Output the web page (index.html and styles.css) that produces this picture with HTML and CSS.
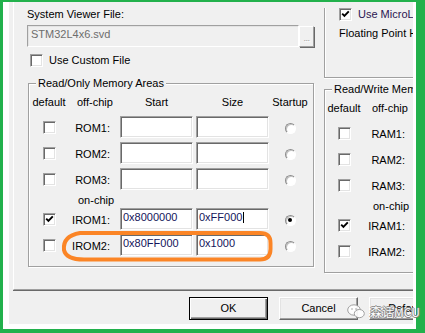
FILE: index.html
```html
<!DOCTYPE html>
<html>
<head>
<meta charset="utf-8">
<link rel="stylesheet" href="styles.css">
</head>
<body>
<div class="shot">
  <div class="dialog">
    <div class="page">
      <div class="col-left">
        <div class="lbl">System Viewer File:</div>
        <div class="file-row">
          <div class="edit-file">STM32L4x6.svd</div>
          <div class="btn-browse">...</div>
        </div>
        <div class="check-row custom"><span class="cb"></span><span>Use Custom File</span></div>
        <fieldset class="group rom">
          <legend>Read/Only Memory Areas</legend>
          <div class="mem-grid">
            <div class="h center">default</div>
            <div class="h pad">off-chip</div>
            <div class="h field">Start</div>
            <div class="h field">Size</div>
            <div class="h center">Startup</div>

            <div class="c-cb"><span class="cb"></span></div>
            <div class="c-lbl">ROM1:</div>
            <div class="c-in"><div class="edit"></div></div>
            <div class="c-in"><div class="edit"></div></div>
            <div class="c-rd"><span class="radio"></span></div>

            <div class="c-cb"><span class="cb"></span></div>
            <div class="c-lbl">ROM2:</div>
            <div class="c-in"><div class="edit"></div></div>
            <div class="c-in"><div class="edit"></div></div>
            <div class="c-rd"><span class="radio"></span></div>

            <div class="c-cb"><span class="cb"></span></div>
            <div class="c-lbl">ROM3:</div>
            <div class="c-in"><div class="edit"></div></div>
            <div class="c-in"><div class="edit"></div></div>
            <div class="c-rd"><span class="radio"></span></div>

            <div class="spacer"></div>
            <div class="onchip">on-chip</div>

            <div class="c-cb"><span class="cb"><svg viewBox="0 0 11 11" width="11" height="11"><path d="M2.2 4.6 L4.4 6.9 L8.8 2.4" fill="none" stroke="#000" stroke-width="1.9"/></svg></span></div>
            <div class="c-lbl">IROM1:</div>
            <div class="c-in"><div class="edit val">0x8000000</div></div>
            <div class="c-in"><div class="edit val">0xFF000<span class="caret"></span></div></div>
            <div class="c-rd"><span class="radio on"></span></div>

            <div class="c-cb"><span class="cb"></span></div>
            <div class="c-lbl">IROM2:</div>
            <div class="c-in"><div class="edit val">0x80FF000</div></div>
            <div class="c-in"><div class="edit val">0x1000</div></div>
            <div class="c-rd"><span class="radio"></span></div>
          </div>
        </fieldset>
      </div>
      <div class="col-right">
        <div class="group-top">
          <div class="check-row micro"><span class="cb"><svg viewBox="0 0 11 11" width="11" height="11"><path d="M2.2 4.6 L4.4 6.9 L8.8 2.4" fill="none" stroke="#000" stroke-width="1.9"/></svg></span><span class="micro-txt">Use MicroLIB</span></div>
          <div class="fp">Floating Point Hardware:</div>
        </div>
        <fieldset class="group rw">
          <legend>Read/Write Memory Areas</legend>
          <div class="mem-grid rw-grid">
            <div class="h center">default</div>
            <div class="h pad">off-chip</div>

            <div class="c-cb"><span class="cb"></span></div>
            <div class="c-lbl">RAM1:</div>

            <div class="c-cb"><span class="cb"></span></div>
            <div class="c-lbl">RAM2:</div>

            <div class="c-cb"><span class="cb"></span></div>
            <div class="c-lbl">RAM3:</div>

            <div class="spacer"></div>
            <div class="onchip">on-chip</div>

            <div class="c-cb"><span class="cb"><svg viewBox="0 0 11 11" width="11" height="11"><path d="M2.2 4.6 L4.4 6.9 L8.8 2.4" fill="none" stroke="#000" stroke-width="1.9"/></svg></span></div>
            <div class="c-lbl">IRAM1:</div>

            <div class="c-cb"><span class="cb"></span></div>
            <div class="c-lbl">IRAM2:</div>
          </div>
        </fieldset>
      </div>
    </div>
    <div class="buttons">
      <div class="btn default">OK</div>
      <div class="btn">Cancel</div>
      <div class="btn">Defaults</div>
    </div>
  </div>
</div>

<svg class="highlight" width="425" height="333" viewBox="0 0 425 333">
  <path d="M80 233 H260 Q270.5 233 270.5 243 V249 Q270.5 259.5 260 259.5 H84 Q66 259.5 64 250 Q62.5 236 80 233 Z" fill="none" stroke="#fb8526" stroke-width="4" stroke-linejoin="round"/>
</svg>

<div class="watermark">
  <svg class="wx" width="18" height="15" viewBox="0 0 18 15">
    <ellipse cx="7" cy="6" rx="6.3" ry="5.2" fill="#fff" stroke="#9a9a9a" stroke-width="1"/>
    <ellipse cx="12.3" cy="9.6" rx="5" ry="4.1" fill="#fff" stroke="#9a9a9a" stroke-width="1"/>
    <circle cx="5" cy="5" r="0.8" fill="#9a9a9a"/>
    <circle cx="9" cy="5" r="0.8" fill="#9a9a9a"/>
  </svg>
  <span class="wm-text">森话MCU</span>
</div>
</body>
</html>
```

FILE: styles.css
```css
html, body {
  margin: 0;
  padding: 0;
}

body {
  width: 425px;
  height: 333px;
  overflow: hidden;
  position: relative;
  background: #22b14c;
  font-family: "Liberation Sans", Arial, sans-serif;
  font-size: 11px;
  line-height: 13px;
  color: #000;
}

.shot {
  box-sizing: border-box;
  width: 413px;
  height: 327px;
  margin: 2px 9px 0 3px;
  padding: 0 3px 5px 6px;
  background: #fff;
}

.dialog {
  width: 404px;
  height: 322px;
  background: #f0f0f0;
  overflow: hidden;
}

.page {
  box-sizing: border-box;
  width: 480px;
  height: 288px;
  margin-left: 4px;
  border-left: 1px solid #fff;
  border-bottom: 1px solid #a0a0a0;
  box-shadow: 0 1px 0 #696969;
  display: flex;
  align-items: flex-start;
}

.col-left {
  flex: none;
  width: 288px;
  margin-left: 13px;
  padding-top: 6px;
}

.col-right {
  flex: none;
  width: 200px;
  margin-left: 9px;
  white-space: nowrap;
}

.lbl {
  height: 13px;
}

.file-row {
  display: flex;
  margin-top: 4px;
  height: 22px;
}

.edit-file {
  box-sizing: border-box;
  width: 272px;
  height: 22px;
  padding: 2px 0 0 3px;
  border: 1px solid;
  border-color: #a0a0a0 #fff #fff #a0a0a0;
  box-shadow: inset 1px 1px 0 #e3e3e3;
  background: #f0f0f0;
  color: #6d6d6d;
}

.btn-browse {
  box-sizing: border-box;
  width: 15px;
  height: 21px;
  margin-top: 1px;
  border: 1px solid;
  border-color: #fff #a0a0a0 #a0a0a0 #fff;
  box-shadow: 1px 1px 0 #696969;
  color: #a0a0a0;
  text-shadow: 1px 1px 0 #fff;
  font-size: 9px;
  line-height: 13px;
  padding-top: 5px;
  text-align: center;
  letter-spacing: -0.5px;
}

.check-row {
  display: flex;
  align-items: center;
  height: 13px;
  gap: 6px;
}

.check-row.custom {
  margin-top: 7px;
  padding-left: 3px;
}

.cb {
  box-sizing: border-box;
  flex: none;
  display: block;
  width: 13px;
  height: 13px;
  background: #fff;
  border: 1px solid;
  border-color: #a0a0a0 #fff #fff #a0a0a0;
  box-shadow: inset 1px 1px 0 #696969, inset -1px -1px 0 #e3e3e3;
}

.cb svg {
  display: block;
}

.group {
  box-sizing: border-box;
  min-width: 0;
  margin: 0;
  border: 1px solid #a0a0a0;
  box-shadow: inset 1px 1px 0 #fff, 1px 1px 0 #fff;
}

.group legend {
  padding: 0 2px;
  background: #f0f0f0;
  line-height: 13px;
}

.rom {
  width: 286px;
  margin: 10px 0 0 1px;
  padding: 6px 0 10px 2px;
}

.rom legend {
  margin-left: 5px;
}

.rw {
  width: 200px;
  margin-top: 5px;
  padding: 6px 0 10px 1px;
}

.rw legend {
  margin-left: 6px;
  white-space: nowrap;
}

.mem-grid {
  display: grid;
  grid-template-columns: 36px 53px 76px 74px 40px;
  grid-template-rows: 16px 22px 22px 22px 10px 22px 22px;
  row-gap: 4px;
}

.rw-grid {
  grid-template-columns: 36px 53px;
}

.h {
  align-self: start;
  white-space: nowrap;
}

.h.center {
  text-align: center;
}

.h.pad {
  padding-left: 10px;
}

.h.field {
  width: 73px;
  text-align: center;
}

.c-cb {
  display: flex;
  justify-content: center;
  align-items: center;
}

.c-lbl {
  align-self: center;
  text-align: right;
  padding-right: 10px;
  padding-top: 2px;
  white-space: nowrap;
}

.c-in {
  display: flex;
}

.edit {
  box-sizing: border-box;
  width: 73px;
  height: 22px;
  padding: 2px 0 0 2px;
  border: 1px solid;
  border-color: #a0a0a0 #fff #fff #a0a0a0;
  box-shadow: inset 1px 1px 0 #696969, inset -1px -1px 0 #e3e3e3;
  background: #fff;
  white-space: nowrap;
}

.edit.val {
  color: #14145a;
}

.caret {
  display: inline-block;
  width: 1px;
  height: 11px;
  margin-left: 1px;
  background: #000;
  vertical-align: -2px;
}

.c-rd {
  display: flex;
  justify-content: center;
  align-items: center;
  padding-top: 2px;
}

.radio {
  box-sizing: border-box;
  position: relative;
  display: block;
  width: 11px;
  height: 11px;
  border-radius: 50%;
  background: #fff;
  border: 1px solid;
  border-color: #8c8c8c #fff #fff #8c8c8c;
  box-shadow: inset 1px 1px 0 #c4c4c4;
}

.radio.on::after {
  content: "";
  position: absolute;
  left: 2.5px;
  top: 2.5px;
  width: 4px;
  height: 4px;
  border-radius: 50%;
  background: #000;
}

.spacer {
  grid-column: 1;
}

.onchip {
  grid-column: 2 / -1;
  align-self: start;
  padding-left: 11px;
  height: 10px;
  white-space: nowrap;
}

.group-top {
  box-sizing: content-box;
  height: 69px;
  padding-left: 14px;
  border-left: 1px solid #a0a0a0;
  border-bottom: 1px solid #a0a0a0;
  box-shadow: inset 1px 0 0 #fff, 0 1px 0 #fff;
}

.check-row.micro {
  margin-top: 6px;
}

.micro-txt {
  color: #2b1550;
}

.fp {
  margin-top: 6px;
  height: 13px;
}

.buttons {
  display: flex;
  gap: 11px;
  margin-top: 7px;
  padding-left: 180px;
}

.btn {
  flex: none;
  box-sizing: border-box;
  width: 79px;
  height: 23px;
  display: flex;
  align-items: center;
  justify-content: center;
  background: #f0f0f0;
  border: 1px solid;
  border-color: #fff #696969 #696969 #fff;
  box-shadow: inset -1px -1px 0 #a0a0a0, inset 1px 1px 0 #e3e3e3;
  white-space: nowrap;
}

.btn.default {
  border-color: #000;
  box-shadow: inset 1px 1px 0 #fff, inset -1px -1px 0 #696969, inset -2px -2px 0 #a0a0a0;
}

.highlight {
  position: absolute;
  left: 0;
  top: 0;
  pointer-events: none;
}

.watermark {
  position: absolute;
  left: 347px;
  top: 304px;
  display: flex;
  align-items: center;
  gap: 5px;
  opacity: 0.92;
  pointer-events: none;
}

.wx {
  display: block;
}

.wm-text {
  font-family: "Noto Sans CJK SC", "Liberation Sans", sans-serif;
  font-size: 12px;
  line-height: 15px;
  color: #fff;
  text-shadow: -1px 0 0 #7a7a7a, 1px 0 0 #7a7a7a, 0 -1px 0 #7a7a7a, 0 1px 0 #7a7a7a;
  white-space: nowrap;
}
```
